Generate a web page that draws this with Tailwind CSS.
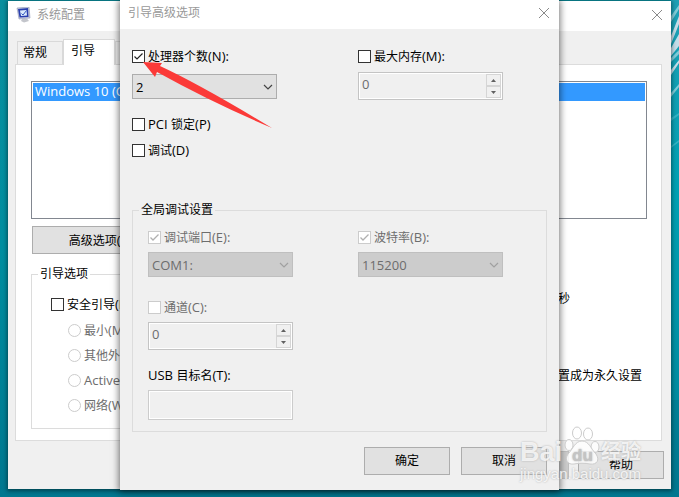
<!DOCTYPE html>
<html lang="zh-CN">
<head>
    <meta charset="UTF-8">
    <meta name="viewport" content="width=device-width, initial-scale=1.0">
    <title>系统配置</title>
    <script src="https://cdn.jsdelivr.net/npm/@tailwindcss/browser@4"></script>
</head>
<body class="relative min-h-screen overflow-hidden bg-linear-to-b from-[#0a8f9e] via-[#008ea0] to-[#00778f] font-['Open_Sans','Noto_Sans_CJK_SC',sans-serif] text-xs leading-4 text-black">

    <!-- Wallpaper streaks -->
    <svg class="absolute top-0 right-0 h-[400px] w-2" viewBox="0 0 8 400" preserveAspectRatio="none" aria-hidden="true">
        <defs>
            <linearGradient id="sea" x1="0" y1="0" x2="0" y2="1">
                <stop offset="0" stop-color="#1f9fb4"/>
                <stop offset="0.5" stop-color="#00a0b2"/>
                <stop offset="1" stop-color="#008ba0"/>
            </linearGradient>
        </defs>
        <rect width="8" height="400" fill="url(#sea)"/>
        <path d="M0 16L8 5V9L0 22ZM0 58L8 50V54L0 62ZM0 93L8 84V87L0 97Z" fill="#7fcbd8"/>
        <path d="M0 36L8 16V24L0 44ZM0 48L8 34V46L0 56ZM0 70L8 60V63L0 75Z" fill="#c3dde8"/>
        <path d="M0 118L8 113V115L0 121ZM0 146L8 140V142L0 148Z" fill="#35b3c4"/>
    </svg>

    <!-- System configuration window -->
    <main class="relative mx-2 mt-px bg-[#f0f0f0] pb-[10px] shadow-[0_1px_4px_1px_rgba(0,0,0,0.45)]">
        <header class="flex h-[30px] items-center bg-white pr-[7px] pb-[2px] pl-2">
            <svg class="h-4 w-4" viewBox="0 0 16 16" aria-hidden="true">
                <path d="M1 1L13 0L14 11L3 12Z" fill="#c9cddd" stroke="#8f96b5" stroke-width="0.600"/>
                <path d="M2 2L12 1L12.500 10L3.500 10.500Z" fill="#2a3fae"/>
                <path d="M4 3.500L10.500 3L11 8.500L5 9Z" fill="#dcebfc"/>
                <path d="M5.500 6.500L7 8L10.500 3.500" fill="none" stroke="#3458c4"/>
                <path d="M6 12L11 11.500L13 14L8 15.500L5 14Z" fill="#c3c5cb"/>
            </svg>
            <h1 class="ml-[5px] text-[#999999]">系统配置</h1>
            <button class="ml-auto p-px" aria-label="关闭">
                <svg class="size-3" viewBox="0 0 12 12"><path d="M1 1L11 11M11 1L1 11" stroke="#8a8a8a"/></svg>
            </button>
        </header>

        <nav class="flex items-end px-[9px] pt-2">
            <button class="h-[23px] w-[46px] border border-b-0 border-[#d9d9d9] pr-[10px]">常规</button>
            <button class="relative -mb-px h-[26px] w-[52px] border border-b-0 border-[#d9d9d9] bg-white pr-3 pb-1">引导</button>
            <button class="h-[23px] w-[46px] border border-b-0 border-[#d9d9d9]">服务</button>
        </nav>

        <section class="mr-[9px] ml-[7px] border border-[#dcdcdc] bg-white pt-4 pr-[14px] pb-[11px] pl-[15px]">
            <ul class="h-[138px] border border-[#828790] p-px">
                <li class="h-[18px] bg-[#3399ff] px-[2px] text-[13px] leading-4 text-white">Windows 10 (C:\Windows) : 当前 OS</li>
            </ul>
            <button class="mt-[7px] ml-px h-[28px] w-[147px] border border-[#adadad] bg-[#e1e1e1]">高级选项<span class="text-[13px]">(V)...</span></button>

            <div class="mt-3 flex justify-between">
                <fieldset class="h-[163px] w-[300px] border border-[#dcdcdc] px-[19px]">
                    <legend class="-ml-[13px] px-[2px]">引导选项</legend>
                    <label class="mt-[14px] flex h-4 items-center gap-[3px]">
                        <input type="checkbox" class="size-[13px] appearance-none border border-[#333333] bg-white">
                        <span>安全引导<span class="text-[13px]">(F)</span></span>
                    </label>
                    <div class="mt-[10px] ml-[17px] grid gap-[9px] text-[#6d6d6d]">
                        <label class="flex h-4 items-center gap-[3px]">
                            <input type="radio" name="safeboot" disabled class="size-[13px] appearance-none rounded-full border border-[#cccccc]">
                            <span>最小<span class="text-[13px]">(M)</span></span>
                        </label>
                        <label class="flex h-4 items-center gap-[3px]">
                            <input type="radio" name="safeboot" disabled class="size-[13px] appearance-none rounded-full border border-[#cccccc]">
                            <span>其他外壳<span class="text-[13px]">(L)</span></span>
                        </label>
                        <label class="flex h-4 items-center gap-[3px]">
                            <input type="radio" name="safeboot" disabled class="size-[13px] appearance-none rounded-full border border-[#cccccc]">
                            <span class="text-[13px]">Active</span>
                        </label>
                        <label class="flex h-4 items-center gap-[3px]">
                            <input type="radio" name="safeboot" disabled class="size-[13px] appearance-none rounded-full border border-[#cccccc]">
                            <span>网络<span class="text-[13px]">(W)</span></span>
                        </label>
                    </div>
                </fieldset>
                <div class="flex flex-col pt-[25px] pr-[5px]">
                    <div class="flex h-4 gap-2">
                        <label for="timeout">超时</label>
                        <input id="timeout" type="text" value="30" class="w-12 border border-[#7a7a7a] px-1">
                        <span>秒</span>
                    </div>
                    <label class="mt-[61px] flex items-center gap-[3px]">
                        <input type="checkbox" class="size-[13px] appearance-none border border-[#333333]">
                        使所有启动设置成为永久设置
                    </label>
                </div>
            </div>
        </section>

        <footer class="mt-[10px] flex justify-end gap-[9px] pr-[7px]">
            <button aria-label="应用" class="h-[28px] w-[86px] border border-[#bfbfbf] bg-[#cccccc]"></button>
            <button class="h-[28px] w-[86px] border border-[#adadad] bg-[#e1e1e1]">帮助</button>
        </footer>
    </main>

    <!-- Advanced boot options dialog -->
    <div role="dialog" aria-labelledby="dialogTitle" class="absolute inset-x-[120px] top-0 bg-[#f0f0f0] pb-[15px] shadow-[0_1px_7px_1px_rgba(0,0,0,0.55)]">
        <header class="flex h-[29px] items-center justify-between bg-white pr-[7px] pb-1 pl-2">
            <h2 id="dialogTitle" class="text-[#999999]">引导高级选项</h2>
            <button class="p-[2px]" aria-label="关闭">
                <svg class="size-3" viewBox="0 0 12 12"><path d="M1 1L11 11M11 1L1 11" stroke="#8a8a8a"/></svg>
            </button>
        </header>

        <div class="px-3">
            <div class="grid grid-cols-[145px_145px] gap-x-[81px] pt-[19px]">
                <div>
                    <label class="flex h-4 items-center gap-[3px]">
                        <span class="relative flex">
                            <input type="checkbox" checked class="size-[13px] appearance-none border border-[#333333] bg-white">
                            <svg class="pointer-events-none absolute inset-0 size-[13px]" viewBox="0 0 13 13"><path d="M2.500 6.500L5 9L10.500 3.500" fill="none" stroke="#222222" stroke-width="1.200"/></svg>
                        </span>
                        <span>处理器个数<span class="text-[13px]">(N):</span></span>
                    </label>
                    <div class="relative mt-[10px]">
                        <select aria-label="处理器个数" class="block h-[25px] w-full appearance-none border border-[#adadad] bg-[#e1e1e1] px-[3px] text-[13px]">
                            <option>2</option>
                        </select>
                        <svg class="pointer-events-none absolute top-[9px] right-1 h-2 w-[10px]" viewBox="0 0 10 8"><path d="M1 2L5 6L9 2" fill="none" stroke="#444444" stroke-width="1.200"/></svg>
                    </div>
                </div>
                <div>
                    <label class="flex h-4 items-center gap-[3px]">
                        <input type="checkbox" class="size-[13px] appearance-none border border-[#333333] bg-white">
                        <span>最大内存<span class="text-[13px]">(M):</span></span>
                    </label>
                    <div class="mt-2 flex h-7 border border-[#c4c4c4] bg-white p-px">
                        <input type="text" value="0" disabled aria-label="最大内存" class="min-w-0 flex-1 bg-[#f0f0f0] px-[2px] pb-1 text-[13px] text-[#6d6d6d]">
                        <div class="flex w-[15px] flex-col">
                            <button disabled aria-label="增加" class="flex flex-1 items-center justify-center border border-[#d5d5d5] bg-[#f0f0f0]"><svg class="h-[3px] w-[5px]" viewBox="0 0 5 3"><path d="M0 3L2.500 0L5 3Z" fill="#606060"/></svg></button>
                            <button disabled aria-label="减少" class="flex flex-1 items-center justify-center border border-[#d5d5d5] bg-[#f0f0f0]"><svg class="h-[3px] w-[5px]" viewBox="0 0 5 3"><path d="M0 0H5L2.500 3Z" fill="#606060"/></svg></button>
                        </div>
                    </div>
                </div>
            </div>

            <div class="mt-4 grid gap-[10px]">
                <label class="flex h-4 items-center gap-[3px]">
                    <input type="checkbox" class="size-[13px] appearance-none border border-[#333333] bg-white">
                    <span><span class="text-[13px]">PCI </span>锁定<span class="text-[13px]">(P)</span></span>
                </label>
                <label class="flex h-4 items-center gap-[3px]">
                    <input type="checkbox" class="size-[13px] appearance-none border border-[#333333] bg-white">
                    <span>调试<span class="text-[13px]">(D)</span></span>
                </label>
            </div>

            <fieldset class="mt-11 border border-[#dcdcdc] px-[15px] pb-[11px]">
                <legend class="-ml-[9px] px-[2px]">全局调试设置</legend>
                <div class="grid grid-cols-[145px_145px] gap-x-[65px] pt-[11px] text-[#6d6d6d]">
                    <div>
                        <label class="flex h-4 items-center gap-[3px]">
                            <span class="relative flex">
                                <input type="checkbox" checked disabled class="size-[13px] appearance-none border border-[#cccccc] bg-white">
                                <svg class="pointer-events-none absolute inset-0 size-[13px]" viewBox="0 0 13 13"><path d="M2.500 6.500L5 9L10.500 3.500" fill="none" stroke="#b0b0b0" stroke-width="1.300"/></svg>
                            </span>
                            <span>调试端口<span class="text-[13px]">(E):</span></span>
                        </label>
                        <div class="relative mt-[7px]">
                            <select disabled aria-label="调试端口" class="block h-[25px] w-full appearance-none border border-[#bfbfbf] bg-[#cccccc] px-[3px] text-[13px] opacity-100">
                                <option>COM1:</option>
                            </select>
                            <svg class="pointer-events-none absolute top-[9px] right-1 h-2 w-[10px]" viewBox="0 0 10 8"><path d="M1 2L5 6L9 2" fill="none" stroke="#a0a0a0" stroke-width="1.200"/></svg>
                        </div>
                    </div>
                    <div>
                        <label class="flex h-4 items-center gap-[3px]">
                            <span class="relative flex">
                                <input type="checkbox" checked disabled class="size-[13px] appearance-none border border-[#cccccc] bg-white">
                                <svg class="pointer-events-none absolute inset-0 size-[13px]" viewBox="0 0 13 13"><path d="M2.500 6.500L5 9L10.500 3.500" fill="none" stroke="#b0b0b0" stroke-width="1.300"/></svg>
                            </span>
                            <span>波特率<span class="text-[13px]">(B):</span></span>
                        </label>
                        <div class="relative mt-[7px]">
                            <select disabled aria-label="波特率" class="block h-[25px] w-full appearance-none border border-[#bfbfbf] bg-[#cccccc] px-[3px] text-[13px] opacity-100">
                                <option>115200</option>
                            </select>
                            <svg class="pointer-events-none absolute top-[9px] right-1 h-2 w-[10px]" viewBox="0 0 10 8"><path d="M1 2L5 6L9 2" fill="none" stroke="#a0a0a0" stroke-width="1.200"/></svg>
                        </div>
                    </div>
                </div>
                <div class="w-[145px] pt-[22px]">
                    <label class="flex h-4 items-center gap-[3px] text-[#6d6d6d]">
                        <input type="checkbox" disabled class="size-[13px] appearance-none border border-[#cccccc] bg-white">
                        <span>通道<span class="text-[13px]">(C):</span></span>
                    </label>
                    <div class="mt-[7px] flex h-7 border border-[#c4c4c4] bg-white p-px">
                        <input type="text" value="0" disabled aria-label="通道" class="min-w-0 flex-1 bg-[#f0f0f0] px-[2px] pb-1 text-[13px] text-[#6d6d6d]">
                        <div class="flex w-[15px] flex-col">
                            <button disabled aria-label="增加" class="flex flex-1 items-center justify-center border border-[#d5d5d5] bg-[#f0f0f0]"><svg class="h-[3px] w-[5px]" viewBox="0 0 5 3"><path d="M0 3L2.500 0L5 3Z" fill="#606060"/></svg></button>
                            <button disabled aria-label="减少" class="flex flex-1 items-center justify-center border border-[#d5d5d5] bg-[#f0f0f0]"><svg class="h-[3px] w-[5px]" viewBox="0 0 5 3"><path d="M0 0H5L2.500 3Z" fill="#606060"/></svg></button>
                        </div>
                    </div>
                    <label for="usbTarget" class="mt-[17px] block h-4"><span class="text-[13px]">USB </span>目标名<span class="text-[13px]">(T):</span></label>
                    <div class="mt-[7px] border border-[#cccccc] bg-white p-px">
                        <input id="usbTarget" type="text" disabled class="block h-[26px] w-full bg-[#f0f0f0]">
                    </div>
                </div>
            </fieldset>

            <div class="mt-[15px] flex justify-end gap-[11px]">
                <button class="h-[28px] w-[86px] border border-[#adadad] bg-[#e1e1e1]">确定</button>
                <button class="h-[28px] w-[86px] border border-[#adadad] bg-[#e1e1e1]">取消</button>
            </div>
        </div>

        <!-- Pointer arrow over the first checkbox -->
        <svg class="pointer-events-none absolute top-[60px] left-[23px] h-[70px] w-[130px]" viewBox="0 0 130 70" aria-hidden="true">
            <path d="M0 2L19 3L17 6Q58 25 129 68Q70 43 14 12L12 17Z" fill="#fb3a38"/>
        </svg>
    </div>

    <!-- Watermark -->
    <div class="pointer-events-none absolute right-[38px] bottom-[15px] w-[121px] font-['Liberation_Sans','Noto_Sans_CJK_SC',sans-serif] text-white/80 [text-shadow:0_0_2px_#a8a8a8]">
        <div class="flex items-end justify-between text-[27px] leading-[28px] font-bold">
            <span>Bai</span>
            <svg class="h-10 w-9" viewBox="0 0 36 40" aria-hidden="true">
                <g fill="#ffffff" fill-opacity="0.8" stroke="#cccccc">
                    <ellipse cx="5" cy="19" rx="4" ry="5.500"/>
                    <ellipse cx="13" cy="7" rx="4.500" ry="6"/>
                    <ellipse cx="24" cy="8" rx="4.500" ry="6"/>
                    <ellipse cx="31" cy="21" rx="4" ry="5.500"/>
                    <path d="M18 15C11 15 9 23 4 28C0 34 4 39 10 38C15 37 21 37 26 38C33 39 36 34 32 28C27 23 25 15 18 15Z"/>
                </g>
                <text x="8" y="35" font-size="17" font-weight="bold" fill="#c4c4c4">du</text>
            </svg>
            <span class="text-[20px]">经验</span>
        </div>
        <div class="text-[15px] leading-4">jingyan.baidu.com</div>
    </div>
</body>
</html>
